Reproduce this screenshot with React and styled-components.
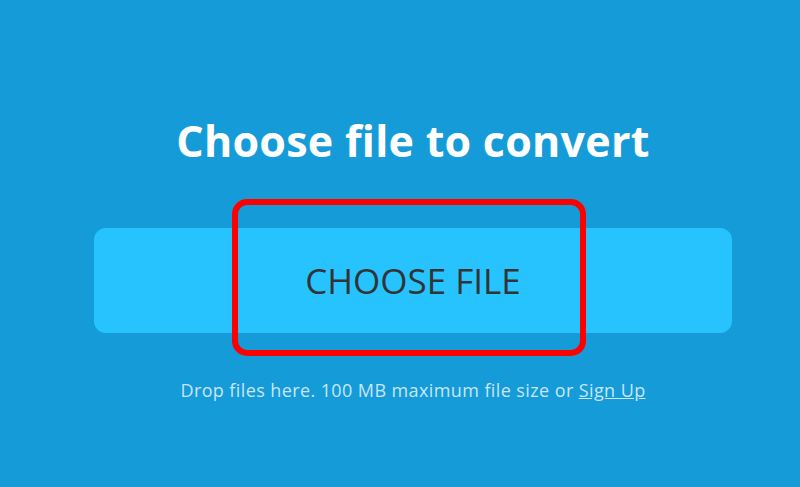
import React from "react";
import styled, { createGlobalStyle } from "styled-components";

const GlobalStyle = createGlobalStyle`
  html, body {
    margin: 0;
    padding: 0;
    background: #159cd8;
  }
  body {
    font-family: "Open Sans", "Noto Sans", sans-serif;
  }
`;

const Page = styled.div`
  width: 800px;
  height: 487px;
  background: #159cd8;
  overflow: hidden;
`;

const Panel = styled.div`
  width: 638px;
  margin-left: 94px;
  padding-top: 110px;
  display: flex;
  flex-direction: column;
  align-items: center;
`;

const Title = styled.h1`
  margin: 0;
  color: #fff;
  font-size: 43px;
  font-weight: 700;
  line-height: 62px;
  letter-spacing: 0.25px;
`;

const ButtonWrap = styled.div`
  position: relative;
  width: 100%;
  margin-top: 56px;
`;

const ChooseButton = styled.button`
  width: 100%;
  height: 105px;
  border: none;
  border-radius: 12px;
  background: #26c3ff;
  color: #333;
  font-family: "Open Sans", "Noto Sans", sans-serif;
  font-size: 35px;
  font-weight: 400;
  cursor: pointer;
`;

const Highlight = styled.div`
  position: absolute;
  left: 138px;
  top: -29px;
  width: 342px;
  height: 145px;
  border: 6px solid #ff0000;
  border-radius: 15px;
  pointer-events: none;
`;

const Note = styled.p`
  margin: 45px 0 0;
  color: rgba(225, 242, 252, 0.88);
  font-size: 18px;
  letter-spacing: 0.4px;
`;

const SignUp = styled.a`
  color: inherit;
  text-decoration: underline;
`;

export default function App() {
  return (
    <Page>
      <GlobalStyle />
      <Panel>
        <Title>Choose file to convert</Title>
        <ButtonWrap>
          <ChooseButton>CHOOSE FILE</ChooseButton>
          <Highlight />
        </ButtonWrap>
        <Note>
          Drop files here. 100 MB maximum file size or <SignUp href="#">Sign Up</SignUp>
        </Note>
      </Panel>
    </Page>
  );
}
